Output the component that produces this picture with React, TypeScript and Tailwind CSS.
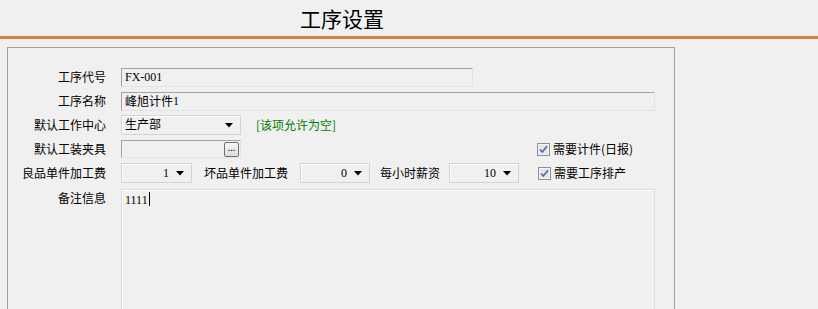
const cjk = { fontFamily: '"Noto Sans CJK SC", sans-serif' };

const Arrow = () => (
  <svg width="8" height="5" viewBox="0 0 8 5" className="shrink-0">
    <path d="M0 0 H8 L4 4.5 Z" fill="#000" />
  </svg>
);

const Select = ({ value, width, right }: { value: string; width: string; right?: boolean }) => (
  <div
    className={`${width} h-[20px] flex items-center border border-[#d4d4d4] bg-[#f0f0f0] shadow-[inset_1px_1px_0_#fff] pl-[3px] pr-[7px] text-[12px] text-black`}
  >
    <span className={`flex-1 ${right ? "text-right pr-[7px]" : ""}`} style={{ fontFamily: '"Liberation Serif", "Noto Sans CJK SC", serif' }}>
      {value}
    </span>
    <Arrow />
  </div>
);

const Check = ({ label }: { label: string }) => (
  <div className="flex items-center gap-[3px]">
    <svg width="13" height="13" viewBox="0 0 13 13">
      <rect x="0.5" y="0.5" width="12" height="12" fill="#dcdcdc" stroke="#8e8f8f" />
      <rect x="1.5" y="1.5" width="10" height="10" fill="#e6e6e6" stroke="#f4f4f4" />
      <path d="M3 6.5 L5.3 9 L10 3.3" fill="none" stroke="#4a6fb5" strokeWidth="1.8" />
    </svg>
    <span className="text-[12px] text-black">{label}</span>
  </div>
);

const Label = ({ text }: { text: string }) => (
  <div className="w-[98px] text-right text-[12px] text-black leading-none">{text}</div>
);

const sunken = "border border-t-[#a3a3a3] border-l-[#a3a3a3] border-b-[#e3e3e3] border-r-[#e3e3e3] bg-[#f0f0f0]";

export default function App() {
  return (
    <div className="w-[818px] h-[309px] overflow-hidden bg-[#f0f0f0]" style={cjk}>
      <div className="h-[36px] pl-[300px] pt-[3px] text-[21px] leading-[30px] text-black">工序设置</div>
      <div className="h-[3px] bg-[#d4843e]" />
      <div className="ml-[7px] mt-[8px] w-[668px] h-[400px] border border-[#a0a0a0] pt-[17px]">
        <div className="h-[24px] flex items-center gap-[15px]">
          <Label text="工序代号" />
          <div className={`w-[352px] h-[19px] ${sunken} flex items-center px-[3px] text-[12px]`} style={{ fontFamily: '"Liberation Serif", serif' }}>
            FX-001
          </div>
        </div>
        <div className="h-[24px] flex items-center gap-[15px]">
          <Label text="工序名称" />
          <div className={`w-[534px] h-[19px] ${sunken} flex items-center px-[3px] text-[12px]`}>
            峰旭计件<span style={{ fontFamily: '"Liberation Serif", serif' }}>1</span>
          </div>
        </div>
        <div className="h-[24px] flex items-center gap-[15px]">
          <Label text="默认工作中心" />
          <Select value="生产部" width="w-[120px]" />
          <span className="text-[12px] text-[#008000]">[该项允许为空]</span>
        </div>
        <div className="h-[24px] flex items-center">
          <Label text="默认工装夹具" />
          <div className={`ml-[15px] w-[120px] h-[18px] ${sunken} flex items-center justify-end`}>
            <div className="w-[15px] h-[15px] mr-[1px] rounded-[2px] border border-[#707070] bg-gradient-to-b from-[#f6f6f6] to-[#dcdcdc] flex items-center justify-center text-[9px] leading-none text-black pb-[3px]">
              ...
            </div>
          </div>
          <div className="ml-[296px]">
            <Check label="需要计件(日报)" />
          </div>
        </div>
        <div className="h-[24px] flex items-center">
          <Label text="良品单件加工费" />
          <div className="ml-[15px]">
            <Select value="1" width="w-[71px]" right />
          </div>
          <span className="ml-[12px] text-[12px] text-black">坏品单件加工费</span>
          <div className="ml-[12px]">
            <Select value="0" width="w-[70px]" right />
          </div>
          <span className="ml-[10px] text-[12px] text-black">每小时薪资</span>
          <div className="ml-[9px]">
            <Select value="10" width="w-[70px]" right />
          </div>
          <div className="ml-[19px]">
            <Check label="需要工序排产" />
          </div>
        </div>
        <div className="mt-[4px] flex items-start gap-[15px]">
          <div className="pt-[3px]">
            <Label text="备注信息" />
          </div>
          <div className="w-[534px] h-[200px] border border-[#dcdcdc] shadow-[inset_1px_1px_0_#fff] bg-[#f0f0f0] px-[3px] pt-[1px] text-[12px] flex items-start" style={{ fontFamily: '"Liberation Serif", serif' }}>
            1111<span className="inline-block w-[1px] h-[14px] bg-black ml-[1px] mt-[1px]" />
          </div>
        </div>
      </div>
    </div>
  );
}
